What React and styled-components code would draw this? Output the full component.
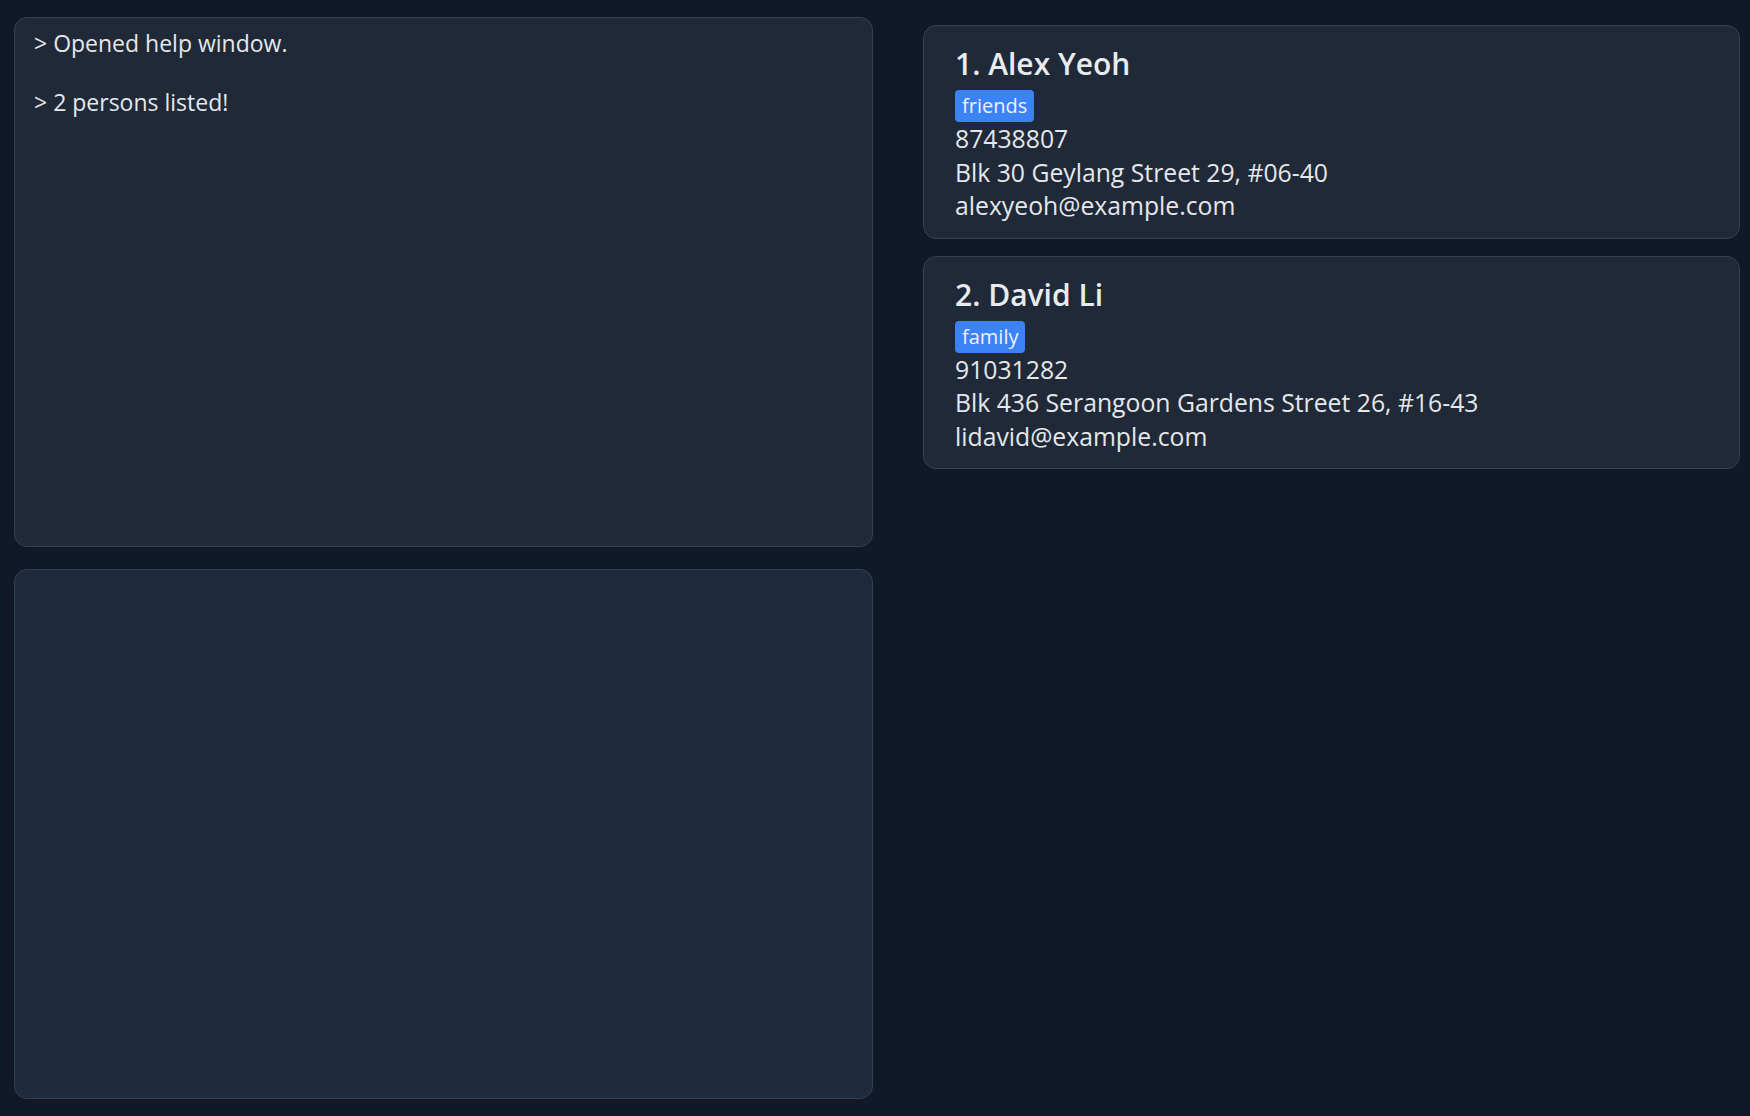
import React from "react";
import styled, { createGlobalStyle } from "styled-components";

const persons = [
  {
    name: "Alex Yeoh",
    tags: ["friends"],
    phone: "87438807",
    address: "Blk 30 Geylang Street 29, #06-40",
    email: "alexyeoh@example.com",
  },
  {
    name: "David Li",
    tags: ["family"],
    phone: "91031282",
    address: "Blk 436 Serangoon Gardens Street 26, #16-43",
    email: "lidavid@example.com",
  },
];

const messages = ["Opened help window.", "2 persons listed!"];

const App = () => {
  return (
    <>
      <GlobalStyle />
      <Page>
        <LeftColumn>
          <ResultPanel>
            {messages.map((m) => (
              <Message key={m}>&gt; {m}</Message>
            ))}
          </ResultPanel>
          <BlankPanel />
        </LeftColumn>
        <PersonList>
          {persons.map((p, i) => (
            <PersonCard key={p.name}>
              <Name>
                {i + 1}. {p.name}
              </Name>
              <Tags>
                {p.tags.map((t) => (
                  <Tag key={t}>{t}</Tag>
                ))}
              </Tags>
              <Field>{p.phone}</Field>
              <Field>{p.address}</Field>
              <Field>{p.email}</Field>
            </PersonCard>
          ))}
        </PersonList>
      </Page>
    </>
  );
};

// start styling

const GlobalStyle = createGlobalStyle`
  html, body {
    margin: 0;
    background: #111827;
  }

  body {
    font-family: "Open Sans", "Noto Sans", sans-serif;
    color: #e5e7eb;
  }
`;

const Page = styled.div`
  display: flex;
  gap: 50px;
  height: 1116px;
  box-sizing: border-box;
  padding: 17px 10px 17px 14px;
`;

const LeftColumn = styled.div`
  flex: 0 0 859px;
  display: grid;
  grid-template-rows: 1fr 1fr;
  gap: 22px;
`;

const Panel = styled.div`
  box-sizing: border-box;
  border-radius: 13px;
  min-height: 0;
`;

const ResultPanel = styled(Panel)`
  background: #1f2937;
  border: 1px solid #374151;
  padding: 11px 19px;
`;

const BlankPanel = styled(Panel)`
  background: #1e293b;
  border: 1px solid #334155;
`;

const Message = styled.div`
  font-size: 23px;
  line-height: 29.5px;
  margin-bottom: 29.5px;
  white-space: pre;
`;

const PersonList = styled.div`
  flex: 1;
  display: flex;
  flex-direction: column;
  gap: 17px;
  padding-top: 8px;
`;

const PersonCard = styled.div`
  background: #1f2937;
  border: 1px solid #374151;
  border-radius: 13px;
  padding: 18px 31px 15px;
  display: flex;
  flex-direction: column;
  align-items: flex-start;
`;

const Name = styled.div`
  font-size: 30px;
  font-weight: 600;
  line-height: 40px;
  color: #e8ebf0;
  margin-bottom: 6px;
`;

const Tags = styled.div`
  display: flex;
  gap: 6px;
`;

const Tag = styled.span`
  background: #3b82f6;
  color: #eef2ff;
  border-radius: 4px;
  font-size: 20px;
  line-height: 32px;
  padding: 0 7px;
`;

const Field = styled.div`
  font-size: 24.75px;
  line-height: 33.5px;
`;

// end styling

export default App;
